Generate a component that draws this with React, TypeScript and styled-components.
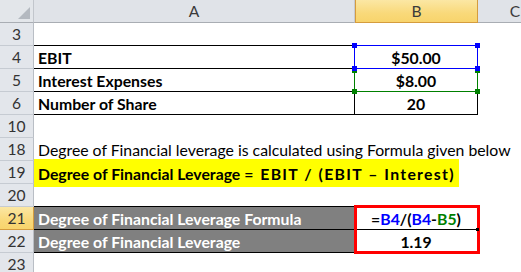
import React from "react";
import styled, { createGlobalStyle, css } from "styled-components";

const Global = createGlobalStyle`
  html, body { margin: 0; padding: 0; background: #ffffff; overflow: hidden; }
  body { font-family: Lato, "Liberation Sans", sans-serif; }
`;

const COLS = "34px 321px 123px 75px";

const Sheet = styled.div`
  width: 521px;
  height: 272px;
  overflow: hidden;
  background: #fff;
  font-family: Lato, "Liberation Sans", sans-serif;
  font-size: 15.8px;
  color: #000;
`;

const HeaderRow = styled.div`
  display: grid;
  grid-template-columns: ${COLS};
  height: 23px;
`;

const headerBase = css`
  box-sizing: border-box;
  height: 23px;
  border-bottom: 1px solid #a9adb3;
  display: flex;
  align-items: center;
  justify-content: center;
  font-size: 15.6px;
  color: #3b3b3b;
`;

const Corner = styled.div`
  ${headerBase};
  position: relative;
  background: #e3e6ea;
  border-right: 1px solid #c2c6cc;
`;

const CornerTriangle = styled.svg`
  position: absolute;
  right: 3px;
  bottom: 3px;
`;

const ColHeader = styled.div<{ $selected?: boolean }>`
  ${headerBase};
  border-right: 1px solid ${(p) => (p.$selected ? "#d59c3e" : "#c6cad0")};
  background: ${(p) =>
    p.$selected
      ? "linear-gradient(#fbe7a4, #f9d97a 60%, #f8d46c)"
      : "#e0e3e8"};
  ${(p) => p.$selected && "border-left: 1px solid #d59c3e; border-bottom-color: #d59c3e;"}
`;

const Row = styled.div`
  display: grid;
  grid-template-columns: ${COLS};
  height: 23px;
`;

const RowHeader = styled.div<{ $selected?: boolean }>`
  box-sizing: border-box;
  height: 23px;
  display: flex;
  align-items: center;
  justify-content: center;
  font-size: 15.6px;
  color: #333;
  border-bottom: 1px solid ${(p) => (p.$selected ? "#d59c3e" : "#c6cbd2")};
  border-right: 1px solid ${(p) => (p.$selected ? "#d59c3e" : "#b9bec5")};
  background: ${(p) =>
    p.$selected ? "linear-gradient(#fbe7a4, #f9d97a 60%, #f8d46c)" : "#e3e6eb"};
`;

type CellProps = {
  $bottom?: string;
  $right?: string;
  $fill?: string;
  $bold?: boolean;
  $center?: boolean;
  $color?: string;
};

const Cell = styled.div<CellProps>`
  box-sizing: border-box;
  position: relative;
  height: 23px;
  padding: 0 4px;
  display: flex;
  align-items: center;
  justify-content: ${(p) => (p.$center ? "center" : "flex-start")};
  white-space: nowrap;
  overflow: visible;
  font-weight: ${(p) => (p.$bold ? 700 : 400)};
  color: ${(p) => p.$color || "#000"};
  background: ${(p) => p.$fill || "transparent"};
  border-bottom: 1px solid ${(p) => p.$bottom || "transparent"};
  border-right: 1px solid ${(p) => p.$right || "transparent"};
`;

const RefBox = styled.div<{ $color: string; $z: number }>`
  position: absolute;
  top: -1px;
  left: -1px;
  width: 124px;
  height: 24px;
  box-sizing: border-box;
  border: 1px solid ${(p) => p.$color};
  pointer-events: none;
  z-index: ${(p) => p.$z};
`;

const Handle = styled.div<{ $color: string; $top: number; $left: number; $z: number }>`
  position: absolute;
  width: 5px;
  height: 5px;
  background: ${(p) => p.$color};
  top: ${(p) => p.$top}px;
  left: ${(p) => p.$left}px;
  z-index: ${(p) => p.$z};
`;

const RedBox = styled.div`
  position: absolute;
  top: -2px;
  left: -1px;
  width: 126px;
  height: 49px;
  box-sizing: border-box;
  border: 3px solid #ff0000;
  pointer-events: none;
  z-index: 2;
`;

const FillDot = styled.div`
  position: absolute;
  right: -2px;
  bottom: -2px;
  width: 3px;
  height: 3px;
  background: #000;
  z-index: 3;
`;

const Highlight = styled.span`
  position: absolute;
  top: -2px;
  left: 0;
  height: 28px;
  padding: 0 4px;
  display: flex;
  align-items: center;
  background: #ffff00;
  font-weight: 700;
  z-index: 1;
`;

const FormulaTail = styled.span`
  letter-spacing: 1.3px;
  word-spacing: 0.5px;
`;

const Ref = styled.span<{ $color: string }>`
  color: ${(p) => p.$color};
`;

const Ref4Overlay = () => (
  <>
    <RefBox $color="#0000ff" $z={3} />
    <Handle $color="#0000ff" $top={-3} $left={-3} $z={3} />
    <Handle $color="#0000ff" $top={-3} $left={120} $z={3} />
    <Handle $color="#0000ff" $top={20} $left={-3} $z={3} />
    <Handle $color="#0000ff" $top={20} $left={120} $z={3} />
  </>
);

const Ref5Overlay = () => (
  <>
    <RefBox $color="#008000" $z={1} />
    <Handle $color="#008000" $top={-1} $left={-3} $z={1} />
    <Handle $color="#008000" $top={-1} $left={120} $z={1} />
    <Handle $color="#008000" $top={20} $left={-3} $z={1} />
    <Handle $color="#008000" $top={20} $left={120} $z={1} />
  </>
);

const B = "#000";

export default function App() {
  return (
    <Sheet>
      <Global />
      <HeaderRow>
        <Corner>
          <CornerTriangle width="12" height="12" viewBox="0 0 12 12">
            <polygon points="12,0 12,12 0,12" fill="#b4b9c0" />
          </CornerTriangle>
        </Corner>
        <ColHeader>A</ColHeader>
        <ColHeader $selected>B</ColHeader>
        <ColHeader>C</ColHeader>
      </HeaderRow>

      <Row>
        <RowHeader>3</RowHeader>
        <Cell $bottom={B} />
        <Cell $bottom={B} />
        <Cell />
      </Row>
      <Row>
        <RowHeader>4</RowHeader>
        <Cell $bottom={B} $right={B} $bold>EBIT</Cell>
        <Cell $bottom={B} $right={B} $bold $center>
          $50.00
          <Ref4Overlay />
        </Cell>
        <Cell />
      </Row>
      <Row>
        <RowHeader>5</RowHeader>
        <Cell $bottom={B} $right={B} $bold>Interest Expenses</Cell>
        <Cell $bottom={B} $right={B} $bold $center>
          $8.00
          <Ref5Overlay />
        </Cell>
        <Cell />
      </Row>
      <Row>
        <RowHeader>6</RowHeader>
        <Cell $bottom={B} $right={B} $bold>Number of Share</Cell>
        <Cell $bottom={B} $right={B} $bold $center>20</Cell>
        <Cell />
      </Row>
      <Row>
        <RowHeader>10</RowHeader>
        <Cell />
        <Cell />
        <Cell />
      </Row>
      <Row>
        <RowHeader>18</RowHeader>
        <Cell>Degree of Financial leverage is calculated using Formula given below</Cell>
        <Cell />
        <Cell />
      </Row>
      <Row>
        <RowHeader>19</RowHeader>
        <Cell>
          <Highlight>
            Degree of Financial Leverage&nbsp;
            <FormulaTail>= EBIT / (EBIT – Interest)</FormulaTail>
          </Highlight>
        </Cell>
        <Cell />
        <Cell />
      </Row>
      <Row>
        <RowHeader>20</RowHeader>
        <Cell $bottom={B} />
        <Cell />
        <Cell />
      </Row>
      <Row>
        <RowHeader $selected>21</RowHeader>
        <Cell $bottom={B} $right={B} $fill="#808080" $bold $color="#fff">
          Degree of Financial Leverage Formula
        </Cell>
        <Cell $bottom={B} $bold $center>
          =<Ref $color="#0000ff">B4</Ref>/(<Ref $color="#0000ff">B4</Ref>-
          <Ref $color="#008000">B5</Ref>)
          <RedBox />
          <FillDot />
        </Cell>
        <Cell />
      </Row>
      <Row>
        <RowHeader>22</RowHeader>
        <Cell $bottom={B} $right={B} $fill="#808080" $bold $color="#fff">
          Degree of Financial Leverage
        </Cell>
        <Cell $bold $center>1.19</Cell>
        <Cell />
      </Row>
      <Row>
        <RowHeader>23</RowHeader>
        <Cell />
        <Cell />
        <Cell />
      </Row>
    </Sheet>
  );
}
